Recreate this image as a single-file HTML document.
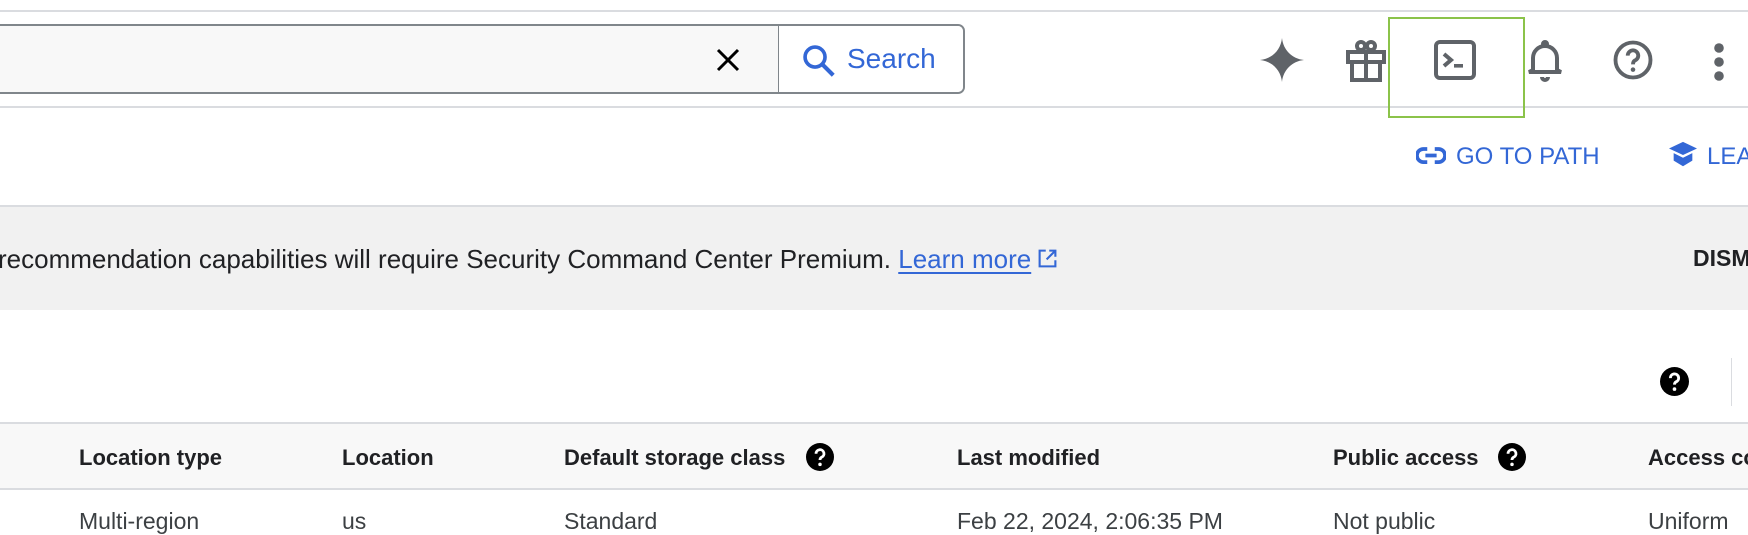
<!DOCTYPE html>
<html><head><meta charset="utf-8"><style>
*{margin:0;padding:0;box-sizing:border-box}
body{width:1748px;height:526px;overflow:hidden;background:#fff;font-family:"Liberation Sans",sans-serif;position:relative;color:#202124}
.a{position:absolute}
.ic{position:absolute;fill:#5f6368}
</style></head><body>
<div class="a" style="left:0;top:10px;width:1748px;height:2px;background:#dadce0"></div>
<div class="a" style="left:-10px;top:24px;width:975px;height:70px;border:2px solid #80868b;border-radius:7px;background:#f8f8f8;overflow:hidden">
 <div class="a" style="left:786px;top:0;width:190px;height:70px;background:#fff;border-left:1.5px solid #80868b"></div>
</div>
<svg class="a" style="left:715px;top:47px" width="26" height="26" viewBox="0 0 26 26"><path d="M3 3L23 23M23 3L3 23" stroke="#000" stroke-width="3"/></svg>
<svg class="a" style="left:800px;top:42px" width="38" height="38" viewBox="0 0 24 24"><circle cx="9.5" cy="9.5" r="6.3" fill="none" stroke="#3367d6" stroke-width="2.3"/><path d="M14 14L21 21" stroke="#3367d6" stroke-width="2.6"/></svg>
<div class="a" style="left:847px;top:43px;font-size:28px;color:#3367d6;font-weight:500">Search</div>
<div class="a" style="left:0;top:106px;width:1748px;height:2px;background:#dadce0"></div>
<svg class="ic" style="left:1258px;top:36px" width="48" height="48" viewBox="0 0 24 24"><path d="M12 1C12.6 7 17 11.4 23 12C17 12.6 12.6 17 12 23C11.4 17 7 12.6 1 12C7 11.4 11.4 7 12 1Z"/></svg>
<svg class="a" style="left:1346px;top:38px" width="40" height="44" viewBox="0 0 20 22" fill="none" stroke="#5f6368" stroke-width="2"><rect x="1" y="7" width="18" height="5"/><rect x="3" y="12" width="14" height="9"/><path d="M10 7V21"/><circle cx="7.5" cy="4" r="2"/><circle cx="12.5" cy="4" r="2"/></svg>
<div class="a" style="left:1388px;top:17px;width:137px;height:101px;border:2px solid #8bc34a"></div>
<svg class="a" style="left:1434px;top:40px" width="42" height="40" viewBox="0 0 21 20"><rect x="1" y="1" width="19" height="18" rx="2" fill="none" stroke="#5f6368" stroke-width="2"/><path d="M5 7L8.5 10L5 13" fill="none" stroke="#5f6368" stroke-width="2"/><rect x="10" y="12" width="4.5" height="1.8" fill="#5f6368"/></svg>
<svg class="a" style="left:1525px;top:38px" width="40" height="44" viewBox="0 0 20 22" fill="none" stroke="#5f6368" stroke-width="2"><path d="M4 16V10A6 6 0 0 1 16 10V16L18 17H2Z"/><path d="M8.5 19.5A1.5 1.5 0 0 0 11.5 19.5"/><circle cx="10" cy="3" r="1"/></svg>
<svg class="a" style="left:1612px;top:39px" width="42" height="42" viewBox="0 0 24 24"><circle cx="12" cy="12" r="10" fill="none" stroke="#5f6368" stroke-width="2.2"/><path d="M9 9.5A3 3 0 1 1 13 12.3C12.2 12.8 12 13.4 12 14.5" fill="none" stroke="#5f6368" stroke-width="2.2"/><circle cx="12" cy="17.5" r="1.3" fill="#5f6368"/></svg>
<svg class="ic" style="left:1712px;top:42px" width="14" height="40" viewBox="0 0 7 20"><circle cx="3.5" cy="3" r="2.4"/><circle cx="3.5" cy="10" r="2.4"/><circle cx="3.5" cy="17" r="2.4"/></svg>
<svg class="a" style="left:1416px;top:146px" width="30" height="19" viewBox="0 0 32 20" fill="none" stroke="#3367d6" stroke-width="4"><path d="M12 3H8A7 7 0 0 0 8 17H12"/><path d="M20 3H24A7 7 0 0 1 24 17H20"/><path d="M10 10H22"/></svg>
<div class="a" style="left:1456px;top:143px;font-size:24px;color:#3367d6;font-weight:500">GO TO PATH</div>
<svg class="a" style="left:1668px;top:141px" width="30" height="28" viewBox="0 0 32 30"><path d="M16 1L31 8L16 15L1 8Z" fill="#3367d6"/><path d="M6 13V21L16 27L26 21V13L16 18Z" fill="#3367d6"/></svg>
<div class="a" style="left:1707px;top:143px;font-size:24px;color:#3367d6;font-weight:500">LEA</div>
<div class="a" style="left:0;top:205px;width:1748px;height:105px;background:#f1f1f1;border-top:2px solid #dadce0"></div>
<div class="a" style="left:-2px;top:244px;font-size:26px;color:#202124;white-space:nowrap">recommendation capabilities will require Security Command Center Premium. <span style="color:#3367d6;text-decoration:underline;text-underline-offset:4px">Learn more</span><svg style="margin-left:6px;vertical-align:-1px" width="21" height="21" viewBox="0 0 24 24" fill="none" stroke="#3367d6" stroke-width="2.4"><path d="M10 3H3V21H21V14"/><path d="M14 3H21V10M21 3L11 13"/></svg></div>
<div class="a" style="left:1693px;top:245px;font-size:23px;font-weight:bold">DISM</div>
<svg class="a" style="left:1660px;top:367px" width="29" height="29" viewBox="0 0 24 24"><circle cx="12" cy="12" r="12" fill="#000"/><path d="M8.6 9.2A3.4 3.4 0 1 1 13.2 12.3C12.4 12.8 12 13.4 12 14.6" fill="none" stroke="#fff" stroke-width="2.4"/><circle cx="12" cy="18.3" r="1.5" fill="#fff"/></svg>
<div class="a" style="left:1731px;top:358px;width:1px;height:48px;background:#dadce0"></div>
<div class="a" style="left:0;top:422px;width:1748px;height:68px;background:#f8f8f8;border-top:2px solid #dadce0;border-bottom:2px solid #dadce0"></div>
<div class="a" style="top:445px;left:0;width:1748px;font-size:22px;font-weight:bold;color:#202124;white-space:nowrap">
<span class="a" style="left:79px">Location type</span>
<span class="a" style="left:342px">Location</span>
<span class="a" style="left:564px">Default storage class</span>
<span class="a" style="left:957px">Last modified</span>
<span class="a" style="left:1333px">Public access</span>
<span class="a" style="left:1648px">Access co</span>
</div>
<svg class="a" style="left:806px;top:443px" width="28" height="28" viewBox="0 0 24 24"><circle cx="12" cy="12" r="12" fill="#000"/><path d="M8.6 9.2A3.4 3.4 0 1 1 13.2 12.3C12.4 12.8 12 13.4 12 14.6" fill="none" stroke="#fff" stroke-width="2.4"/><circle cx="12" cy="18.3" r="1.5" fill="#fff"/></svg>
<svg class="a" style="left:1498px;top:443px" width="28" height="28" viewBox="0 0 24 24"><circle cx="12" cy="12" r="12" fill="#000"/><path d="M8.6 9.2A3.4 3.4 0 1 1 13.2 12.3C12.4 12.8 12 13.4 12 14.6" fill="none" stroke="#fff" stroke-width="2.4"/><circle cx="12" cy="18.3" r="1.5" fill="#fff"/></svg>
<div class="a" style="top:508px;left:0;width:1748px;font-size:23px;color:#3c4043;white-space:nowrap">
<span class="a" style="left:79px">Multi-region</span>
<span class="a" style="left:342px">us</span>
<span class="a" style="left:564px">Standard</span>
<span class="a" style="left:957px">Feb 22, 2024, 2:06:35 PM</span>
<span class="a" style="left:1333px">Not public</span>
<span class="a" style="left:1648px">Uniform</span>
</div>
</body></html>
